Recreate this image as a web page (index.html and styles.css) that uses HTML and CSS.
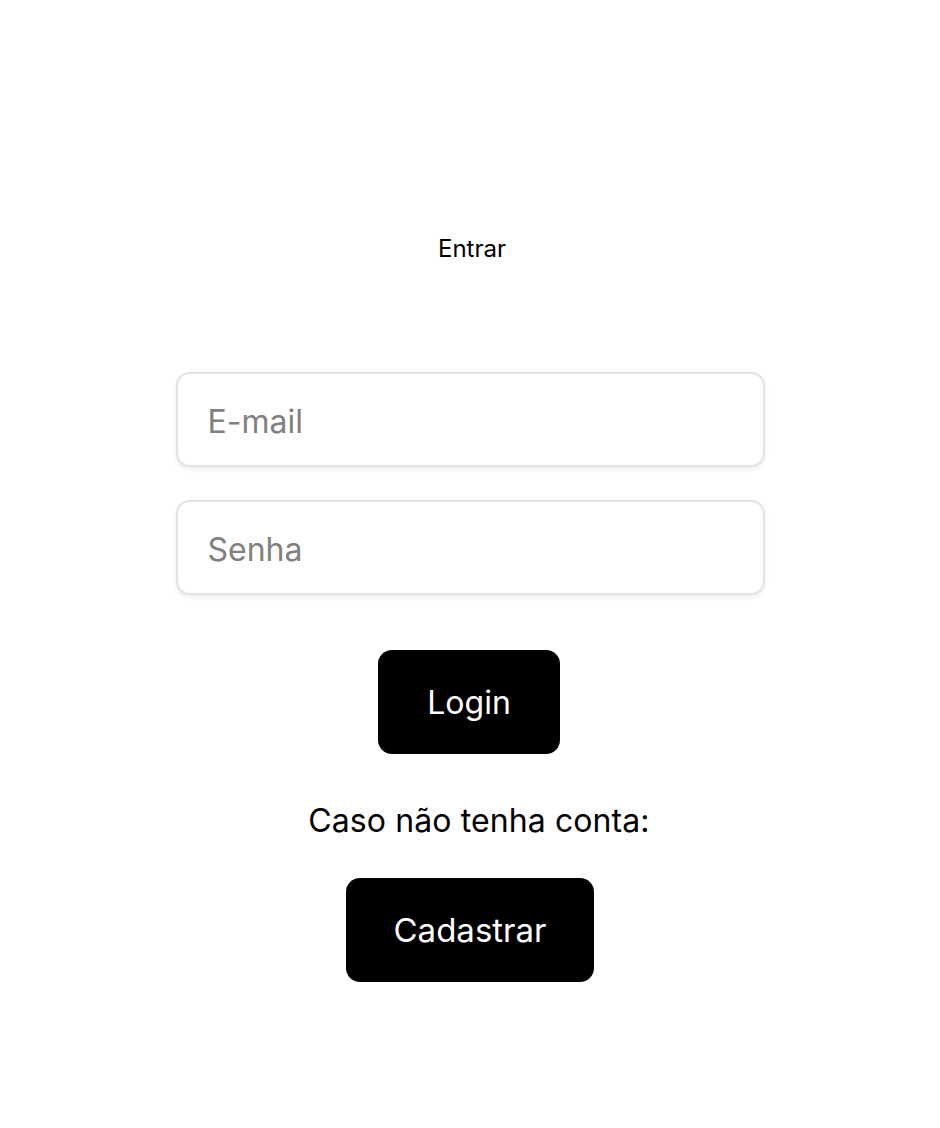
FILE: index.html
```html
<!DOCTYPE html>
<html lang="pt-BR">
<head>
<meta charset="utf-8">
<title>Entrar</title>
<link rel="stylesheet" href="styles.css">
</head>
<body>
<main class="page">
  <h1 class="title">Entrar</h1>
  <form class="form">
    <input class="field" type="email" placeholder="E-mail">
    <input class="field" type="password" placeholder="Senha">
    <button class="btn btn-login" type="button">Login</button>
    <p class="note">Caso não tenha conta:</p>
    <button class="btn btn-signup" type="button">Cadastrar</button>
  </form>
</main>
</body>
</html>
```
FILE: styles.css
```css
html, body {
  margin: 0;
  padding: 0;
  background: #ffffff;
}
body {
  font-family: Inter, "Noto Sans", sans-serif;
  color: #000;
}
.page {
  display: flex;
  flex-direction: column;
  align-items: center;
  padding-top: 234px;
}
.title {
  margin: 0;
  font-size: 24px;
  font-weight: 400;
  line-height: 30px;
  margin-left: 4px;
}
.form {
  display: flex;
  flex-direction: column;
  align-items: center;
  margin-top: 108px;
  width: 589px;
}
.field {
  box-sizing: border-box;
  width: 589px;
  height: 95px;
  border: 2px solid #e3e3e3;
  border-radius: 14px;
  box-shadow: 0 2px 4px rgba(0,0,0,0.08);
  padding: 3px 30px 0;
  font-family: Inter, "Noto Sans", sans-serif;
  font-size: 32px;
  color: #000;
  outline: none;
  margin-bottom: 33px;
}
.field::placeholder {
  color: #808080;
}
.field + .field {
  margin-bottom: 55px;
}
.btn {
  box-sizing: border-box;
  height: 104px;
  background: #000;
  color: #fff;
  border: none;
  border-radius: 14px;
  font-family: Inter, "Noto Sans", sans-serif;
  font-size: 32px;
  font-weight: 400;
  cursor: pointer;
}
.btn-login {
  width: 182px;
  margin-left: -2px;
}
.note {
  margin: 47px 0 37px;
  font-size: 32px;
  line-height: 40px;
  margin-left: 18px;
  letter-spacing: 0.1px;
}
.btn-signup {
  width: 248px;
  font-size: 33px;
}
```
